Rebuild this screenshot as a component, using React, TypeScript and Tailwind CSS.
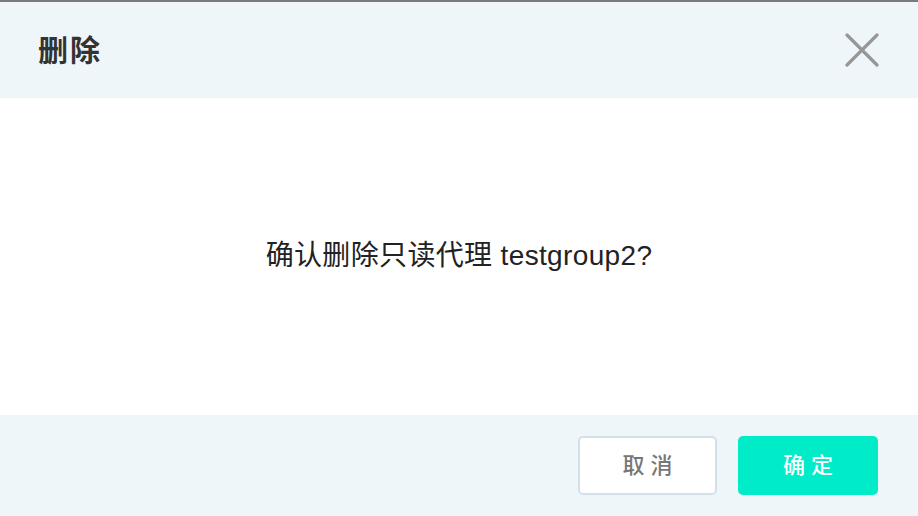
import React from 'react';

export default function App() {
  return (
    <div
      className="w-[918px] h-[516px] flex flex-col bg-white border-t-2 border-[#7b7b7b] overflow-hidden"
      style={{ fontFamily: '"Liberation Sans", "Noto Sans CJK SC", sans-serif' }}
    >
      <div className="h-[96px] shrink-0 bg-[#eff6fa] flex items-center justify-between pl-[38px] pr-[38px]">
        <span className="text-[30px] font-bold text-[#333] tracking-[2px]">删除</span>
        <button className="w-[36px] h-[36px] flex items-center justify-center">
          <svg width="34" height="34" viewBox="0 0 34 34" fill="none">
            <path d="M2 2 L32 32 M32 2 L2 32" stroke="#979797" strokeWidth="3.2" strokeLinecap="round" />
          </svg>
        </button>
      </div>
      <div className="flex-1 flex items-center justify-center pb-[2px]">
        <p className="text-[28px] text-[#222] tracking-[0.35px]">确认删除只读代理 testgroup2?</p>
      </div>
      <div className="h-[101px] shrink-0 bg-[#eff6fa] flex items-center justify-end gap-[21px] pr-[40px]">
        <button className="w-[139px] h-[59px] rounded-[5px] border-2 border-[#d3e0ea] bg-white text-[22px] font-medium text-[#777] tracking-[6px] pl-[6px]">
          取消
        </button>
        <button className="w-[140px] h-[59px] rounded-[5px] bg-[#00ecc9] text-[22px] font-medium text-white tracking-[6px] pl-[6px]">
          确定
        </button>
      </div>
    </div>
  );
}
